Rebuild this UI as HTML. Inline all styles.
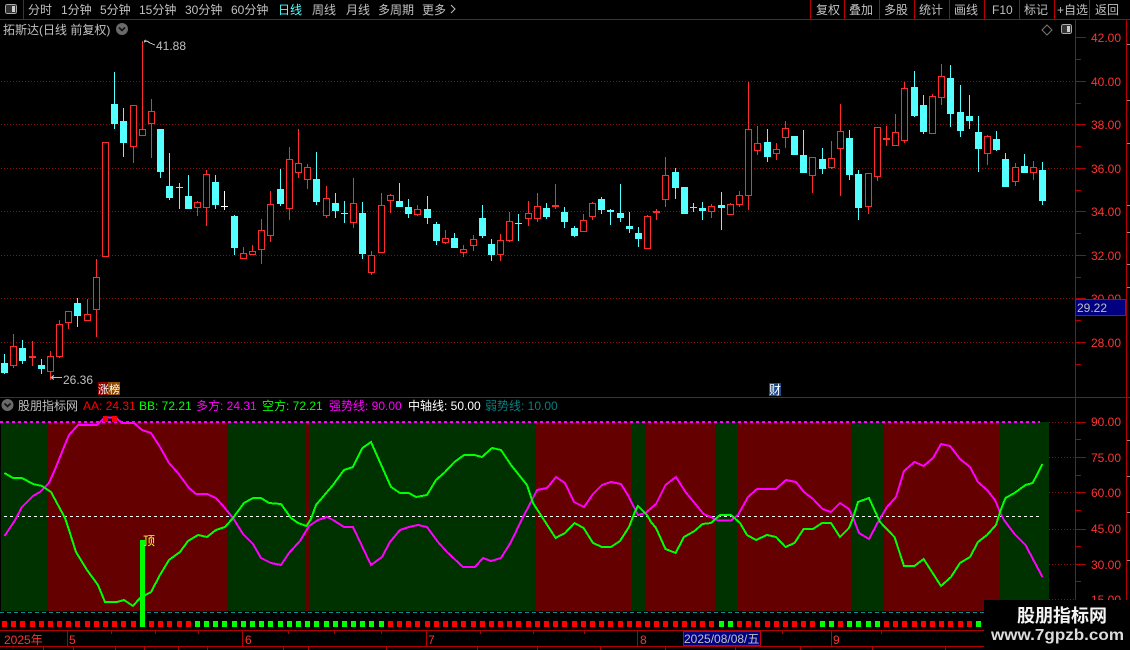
<!DOCTYPE html>
<html><head><meta charset="utf-8"><style>
html,body{margin:0;padding:0;background:#000;overflow:hidden}
svg{display:block}
text{font-family:"Liberation Sans","WenQuanYi Zen Hei","Noto Sans CJK SC",sans-serif;font-size:12px}
</style></head><body>
<svg width="1130" height="650" viewBox="0 0 1130 650" xmlns="http://www.w3.org/2000/svg">
<rect width="1130" height="650" fill="#000"/>
<!-- grid -->
<g stroke="#8a0c0c" stroke-dasharray="1 2" fill="none" shape-rendering="crispEdges">
<path d="M1 81.5H1075M1 124.5H1075M1 168.5H1075M1 211.5H1075M1 255.5H1075M1 298.5H1075M1 342.5H1075"/>
<path d="M1049 422.5H1075M1049 457.5H1075M1049 492.5H1075M1049 529.5H1075M1049 564.5H1075M1049 599.5H1075"/>
</g>
<!-- candles -->
<g shape-rendering="crispEdges">
<path fill="none" stroke="#54ffff" d="M4.5 354V374M22.5 340V364M41.5 359V374M77.5 298V327M114.5 72V129M123.5 108V157M160.5 129V178M169.5 153V200M179.5 183V209M188.5 175V209M215.5 175V209M234.5 215V255M280.5 169V206M316.5 152V205M335.5 193V218M344.5 201V223M362.5 202V259M399.5 183V207M408.5 199V218M427.5 196V224M436.5 222V245M454.5 233V248M482.5 205V238M491.5 239V261M518.5 214V241M546.5 203V219M564.5 207V228M574.5 226V237M601.5 197V214M610.5 209V225M620.5 184V222M629.5 212V233M638.5 227V247M675.5 168V199M684.5 187V214M693.5 203V212M702.5 202V220M721.5 192V230M767.5 129V162M794.5 136V155M803.5 130V173M822.5 148V174M849.5 130V180M858.5 170V220M914.5 71V117M923.5 95V134M950.5 65V127M960.5 85V137M969.5 95V129M978.5 116V172M996.5 131V151M1005.5 153V187M1024.5 154V173M1042.5 162V205"/>
<path fill="#54ffff" d="M1 363h7V373h-7zM19 348h7V361h-7zM38 365h7V369h-7zM74 303h7V316h-7zM111 104h7V124h-7zM120 121h7V143h-7zM157 129h7V172h-7zM166 186h7V198h-7zM176 187h7V188h-7zM185 196h7V209h-7zM212 182h7V205h-7zM231 216h7V248h-7zM277 189h7V204h-7zM313 179h7V202h-7zM332 203h7V211h-7zM341 213h7V214h-7zM359 213h7V254h-7zM396 201h7V207h-7zM405 207h7V214h-7zM424 209h7V218h-7zM433 224h7V241h-7zM451 238h7V248h-7zM479 218h7V236h-7zM488 244h7V255h-7zM515 223h7V224h-7zM543 208h7V217h-7zM561 212h7V222h-7zM571 228h7V236h-7zM598 199h7V210h-7zM607 210h7V212h-7zM617 213h7V218h-7zM626 226h7V229h-7zM635 233h7V239h-7zM672 172h7V188h-7zM681 187h7V214h-7zM690 207h7V208h-7zM699 208h7V211h-7zM718 205h7V208h-7zM764 142h7V157h-7zM791 136h7V155h-7zM800 155h7V173h-7zM819 159h7V169h-7zM846 138h7V175h-7zM855 174h7V208h-7zM911 87h7V116h-7zM920 105h7V132h-7zM947 78h7V114h-7zM957 112h7V131h-7zM966 116h7V121h-7zM975 132h7V149h-7zM993 139h7V150h-7zM1002 159h7V187h-7zM1021 166h7V173h-7zM1039 170h7V201h-7z"/>
<path fill="none" stroke="#ff2c2c" d="M13.5 334V368M32.5 341V366M50.5 351V380M59.5 320V358M68.5 311V329M87.5 299V321M96.5 259V337M105.5 142V257M133.5 105V163M142.5 41V136M151.5 99V158M197.5 201V216M206.5 170V226M243.5 247V259M252.5 245V255M261.5 219V264M270.5 191V242M289.5 147V220M298.5 129V178M307.5 164V189M326.5 186V218M353.5 178V228M371.5 251V275M381.5 193V253M390.5 194V213M417.5 205V216M445.5 230V244M463.5 245V257M473.5 235V251M500.5 234V261M509.5 212V242M528.5 201V226M537.5 193V222M555.5 184V209M583.5 214V232M592.5 202V220M647.5 215V249M656.5 209V220M665.5 157V207M711.5 204V218M730.5 203V215M739.5 191V207M748.5 82V210M757.5 126V155M776.5 143V160M785.5 121V148M812.5 157V193M831.5 141V169M840.5 104V196M868.5 173V214M877.5 127V181M886.5 126V146M895.5 114V146M904.5 82V143M932.5 94V134M941.5 64V105M987.5 135V165M1015.5 163V186M1033.5 161V180"/>
<path fill="#000" stroke="#ff2c2c" d="M10.5 346.5h6V365.5h-6zM47.5 356.5h6V371.5h-6zM56.5 324.5h6V356.5h-6zM65.5 311.5h6V322.5h-6zM84.5 314.5h6V320.5h-6zM93.5 277.5h6V309.5h-6zM102.5 142.5h6V256.5h-6zM130.5 105.5h6V146.5h-6zM139.5 129.5h6V135.5h-6zM148.5 111.5h6V123.5h-6zM194.5 202.5h6V207.5h-6zM203.5 174.5h6V207.5h-6zM240.5 253.5h6V258.5h-6zM249.5 251.5h6V254.5h-6zM258.5 230.5h6V249.5h-6zM267.5 204.5h6V235.5h-6zM286.5 159.5h6V208.5h-6zM295.5 163.5h6V172.5h-6zM304.5 167.5h6V179.5h-6zM323.5 198.5h6V215.5h-6zM350.5 203.5h6V222.5h-6zM368.5 255.5h6V272.5h-6zM378.5 205.5h6V252.5h-6zM387.5 195.5h6V200.5h-6zM414.5 209.5h6V214.5h-6zM442.5 238.5h6V242.5h-6zM460.5 249.5h6V252.5h-6zM470.5 239.5h6V245.5h-6zM497.5 240.5h6V254.5h-6zM506.5 221.5h6V240.5h-6zM525.5 213.5h6V218.5h-6zM534.5 206.5h6V218.5h-6zM580.5 220.5h6V231.5h-6zM589.5 203.5h6V216.5h-6zM644.5 216.5h6V248.5h-6zM662.5 175.5h6V199.5h-6zM708.5 206.5h6V211.5h-6zM727.5 204.5h6V214.5h-6zM736.5 195.5h6V204.5h-6zM745.5 129.5h6V195.5h-6zM754.5 143.5h6V150.5h-6zM773.5 149.5h6V153.5h-6zM782.5 128.5h6V137.5h-6zM809.5 157.5h6V175.5h-6zM828.5 158.5h6V167.5h-6zM837.5 131.5h6V148.5h-6zM865.5 173.5h6V206.5h-6zM874.5 127.5h6V176.5h-6zM892.5 132.5h6V145.5h-6zM901.5 88.5h6V140.5h-6zM929.5 96.5h6V133.5h-6zM938.5 76.5h6V97.5h-6zM984.5 136.5h6V153.5h-6zM1012.5 167.5h6V181.5h-6zM1030.5 167.5h6V172.5h-6z"/>
<path fill="#ff2c2c" d="M29 356h7v2h-7zM552 205h7v2h-7zM653 211h7v2h-7zM883 138h7v2h-7z"/>
<path stroke="#fff" fill="none" d="M224.5 191V210M221 206.5H228"/>
</g>
<!-- axis labels main -->
<g fill="#ff3232">
<text x="1091" y="42">42.00</text><text x="1091" y="86">40.00</text><text x="1091" y="129">38.00</text><text x="1091" y="173">36.00</text><text x="1091" y="216">34.00</text><text x="1091" y="260">32.00</text><text x="1091" y="303">30.00</text><text x="1091" y="347">28.00</text>
<text x="1091" y="426">90.00</text><text x="1091" y="462">75.00</text><text x="1091" y="497">60.00</text><text x="1091" y="533">45.00</text><text x="1091" y="569">30.00</text><text x="1091" y="604">15.00</text>
</g>
<!-- hi/lo labels -->
<g fill="#c0c0c0"><text x="156" y="50">41.88</text><text x="63" y="384">26.36</text></g>
<g stroke="#c0c0c0" fill="none" shape-rendering="crispEdges"><path d="M62 377.5H52M54 375.5l-3 2 3 2M144 42l3-1 3 2 5 2M144 41l2-1"/></g>
<!-- indicator bands -->
<g shape-rendering="crispEdges">
<rect x="1" y="422" width="47" height="189" fill="#003200"/>
<rect x="48" y="422" width="180" height="189" fill="#640000"/>
<rect x="228" y="422" width="77" height="189" fill="#003200"/>
<rect x="305" y="422" width="5" height="189" fill="#640000"/>
<rect x="310" y="422" width="225" height="189" fill="#003200"/>
<rect x="535" y="422" width="97" height="189" fill="#640000"/>
<rect x="632" y="422" width="13" height="189" fill="#003200"/>
<rect x="645" y="422" width="70" height="189" fill="#640000"/>
<rect x="715" y="422" width="22" height="189" fill="#003200"/>
<rect x="737" y="422" width="115" height="189" fill="#640000"/>
<rect x="852" y="422" width="32" height="189" fill="#003200"/>
<rect x="884" y="422" width="115" height="189" fill="#640000"/>
<rect x="999" y="422" width="50" height="189" fill="#003200"/>
<path stroke="#ff00ff" stroke-width="2" stroke-dasharray="3 3" d="M0 422H1040"/>
<path stroke="#ffffff" stroke-dasharray="3 3" d="M4 516.5H1040"/>
<path stroke="#0f8a8a" stroke-dasharray="4 3" d="M0 612.5H1130"/>
<!-- squares -->
<path stroke="#ff0000" stroke-width="6" d="M2 624h5M11 624h5M20 624h5M30 624h5M39 624h5M48 624h5M57 624h5M66 624h5M75 624h5M85 624h5M94 624h5M103 624h5M112 624h5M121 624h5M131 624h5M149 624h5M158 624h5M167 624h5M177 624h5M186 624h5M388 624h5M397 624h5M406 624h5M415 624h5M425 624h5M434 624h5M443 624h5M452 624h5M461 624h5M471 624h5M480 624h5M489 624h5M498 624h5M507 624h5M516 624h5M526 624h5M535 624h5M544 624h5M553 624h5M562 624h5M572 624h5M581 624h5M590 624h5M599 624h5M608 624h5M618 624h5M627 624h5M636 624h5M645 624h5M654 624h5M663 624h5M673 624h5M682 624h5M691 624h5M700 624h5M709 624h5M737 624h5M746 624h5M755 624h5M765 624h5M774 624h5M783 624h5M792 624h5M801 624h5M810 624h5M838 624h5M884 624h5M893 624h5M902 624h5M912 624h5M921 624h5M930 624h5M939 624h5M948 624h5M958 624h5M967 624h5"/>
<path stroke="#00ff00" stroke-width="6" d="M195 624h5M204 624h5M213 624h5M222 624h5M232 624h5M241 624h5M250 624h5M259 624h5M268 624h5M278 624h5M287 624h5M296 624h5M305 624h5M314 624h5M324 624h5M333 624h5M342 624h5M351 624h5M360 624h5M369 624h5M379 624h5M719 624h5M728 624h5M820 624h5M829 624h5M847 624h5M856 624h5M866 624h5M875 624h5M976 624h5"/>
<rect x="140" y="540" width="5" height="87" fill="#00ff00"/>
</g>
<text x="143" y="545" fill="#ffff40">顶</text>
<!-- lines -->
<polyline fill="none" stroke="#ff00ff" stroke-width="2" shape-rendering="crispEdges" points="4.5,536 14.5,521 22,507 33,496 40,492 49,483 56,467 64,447 69,435 78,425 97,425 104,418 115,417 122,423 134,423 142,430 151,433 160,447 169,463 178,473 189,488 196,494 207,494 216,498 224,507 233,518 243,534 253,544 261,558 271,563 281,565 289,553 300,541 309,526 318,520 327,517 333,520 344,527 353,527 371,565 382,557 390,542 400,530 409,527 418,525 427,527 438,542 447,552 463,567 475,567 483,558 491,561 501,558 511,542 522,519 531,502 537,490 547,488 556,477 565,483 574,502 584,507 593,494 602,485 611,482 621,484 629,497 638,515 645.5,513 656,504 665.5,485 676,477 685.5,492 694.5,503 703.6,514 713,518 718,520.5 731,520.5 738,515 748,497 757,489 776,489 786,480 796,482 804,492 813,499 822.5,509 831,512 840,503 849,509 854,520 859,533 869,539 878,522 887,507 896,497 904,471 914.5,462 923.6,466 933,458 941,444 950,446 960,459 970,467 978,482 987,490 995,500 1000,512 1004,520 1014.5,534 1025.5,545 1034.5,562 1042.5,577"/>
<polyline fill="none" stroke="#00ff00" stroke-width="2" shape-rendering="crispEdges" points="4.4,473 13,478 22,478 33,484 42,486 51,492 58,505 65,518 69,530 76,552 87,570 98,585 105,602 117,602 124,600 133,606 140,598 151,592 160,575 169,560 180,552 188,541 198,535 207,537 216,530 225,527 233,518 244,503 253,498 261,498 269,503 281,504 291,518 298,523 306.5,526 311,519 316,505 333,485 344,470 353,467 362.5,448 371,442 391,487 400,493 409,493 416,497 427,495 436,480 444,473 454.5,462 464,455 474.5,455 482,457 492,448 501,450 511,465 527,485 533,503 544,520 555.6,538 565,533 574.5,523 583.6,528 593,543 602,547 611,547 620,541 629,527 634.5,513 638,506 647,515 651,522 656,528 665.5,549 675.6,553 684,537 694.5,531 702.5,524 711,523 720,515 731,515 740,523 747,535 756,540 767,535 776,537 785.5,547 794.5,543 803.6,529 813,529 822,523 831,523 840,537 849,528 853,518 858,502 869,498 880,522 894.5,537 904,566 914.5,566 923.6,559 941,586 951,577 960,563 970,557 978,542 987,535 996,525 1000,512 1005.5,498 1014.5,493 1025.5,485 1032.7,483 1042.5,464"/>
<path fill="#ff0000" shape-rendering="crispEdges" d="M103 416h5v6h-5zM112 416h5v6h-5z"/>
<!-- frame lines -->
<g stroke="#b40000" fill="none" shape-rendering="crispEdges">
<path d="M0 19.5H1130M0 397.5H1130M0 630.5H1130M0 646.5H1130"/>
<path d="M23.5 0V19M810.5 0V19M844.5 0V19M879.5 0V19M914.5 0V19M949.5 0V19M984.5 0V19M1019.5 0V19M1054.5 0V19M1089.5 0V19"/>
<path d="M1075.5 19V630M1126.5 19V630"/>
<path d="M1076 37.5h10M1076 59.5h5M1076 81.5h10M1076 103.5h5M1076 124.5h10M1076 146.5h5M1076 168.5h10M1076 190.5h5M1076 211.5h10M1076 233.5h5M1076 255.5h10M1076 277.5h5M1076 298.5h10M1076 320.5h5M1076 342.5h10M1076 364.5h5"/>
<path d="M1076 422.5h10M1076 439.5h5M1076 457.5h10M1076 475.5h5M1076 492.5h10M1076 510.5h5M1076 529.5h10M1076 546.5h5M1076 564.5h10M1076 581.5h5"/>
<path d="M67.5 631V646M242.5 631V646M426.5 631V646M637.5 631V646M831.5 631V646"/>
<path d="M111.5 631v3M155.5 631v3M198.5 631v3M288.5 631v3M334.5 631v3M381.5 631v3M480.5 631v3M533.5 631v3M584.5 631v3M782.5 631v3M881.5 631v3M43.5 646v4M73.5 646v4M115.5 646v4M144.5 646v4M178.5 646v4M207.5 646v4M283.5 646v4M308.5 646v4M386.5 646v4M477.5 646v4M537.5 646v4M600.5 646v4M665.5 646v4M735.5 646v4M800.5 646v4M872.5 646v4M945.5 646v4"/>
</g>
<path stroke="#8c8c8c" fill="none" shape-rendering="crispEdges" d="M1127 44.5h3M1127 100.5h3M1127 143.5h3M1127 205.5h3M1127 232.5h3M1127 264.5h3M1127 287.5h3M1127 440.5h3M1127 476.5h3M1127 512.5h3M1127 560.5h3"/>
<!-- toolbar -->
<g fill="#c0c0c0">
<text x="28" y="14">分时</text><text x="61" y="14">1分钟</text><text x="100" y="14">5分钟</text><text x="139" y="14">15分钟</text><text x="185" y="14">30分钟</text><text x="231" y="14">60分钟</text>
<text x="278" y="14" fill="#54ffff">日线</text>
<text x="312" y="14">周线</text><text x="346" y="14">月线</text><text x="378" y="14">多周期</text><text x="422" y="14">更多</text>
<text x="816" y="14">复权</text><text x="849" y="14">叠加</text><text x="884" y="14">多股</text><text x="919" y="14">统计</text><text x="954" y="14">画线</text><text x="992" y="14">F10</text><text x="1024" y="14">标记</text><text x="1057" y="14">+自选</text><text x="1095" y="14">返回</text>
<text x="3" y="34">拓斯达(日线 前复权)</text>
</g>
<path d="M451 5l4 4-4 4" fill="none" stroke="#c0c0c0"/>
<!-- small icons -->
<g shape-rendering="crispEdges">
<rect x="5.5" y="4.5" width="11" height="9" rx="2" fill="#333" stroke="#aaa"/><rect x="12" y="6" width="3" height="6" fill="#ccc"/>
<rect x="1061.5" y="24.5" width="10" height="9" rx="2" fill="#333" stroke="#aaa"/><rect x="1067" y="26" width="3" height="6" fill="#ccc"/>
</g>
<path d="M1047 25l5 5-5 5-5-5z" fill="none" stroke="#777"/>
<circle cx="122" cy="29" r="6" fill="#6a6a6a"/><path d="M119 27.5l3 3 3-3" fill="none" stroke="#111" stroke-width="1.6"/>
<circle cx="7.5" cy="405" r="6" fill="#6a6a6a"/><path d="M4.5 403.5l3 3 3-3" fill="none" stroke="#111" stroke-width="1.6"/>
<!-- legend -->
<text x="18" y="410" fill="#c0c0c0">股朋指标网</text>
<text x="83" y="410" fill="#ff0000">AA: 24.31</text>
<text x="139" y="410" fill="#00ff00">BB: 72.21</text>
<text x="196" y="410" fill="#ff00ff">多方: 24.31</text>
<text x="262" y="410" fill="#00ff00">空方: 72.21</text>
<text x="329" y="410" fill="#ff00ff">强势线: 90.00</text>
<text x="408" y="410" fill="#ffffff">中轴线: 50.00</text>
<text x="485" y="410" fill="#0a7f7f">弱势线: 10.00</text>
<!-- tags -->
<g shape-rendering="crispEdges"><rect x="98" y="382" width="10" height="13" fill="#8b0000"/><rect x="108" y="382" width="12" height="13" fill="#8b4a00"/><rect x="769" y="383" width="12" height="13" fill="#1a4a8a"/></g>
<text x="98" y="393" fill="#fff" style="font-size:11px">涨榜</text>
<text x="769" y="394" fill="#fff">财</text>
<!-- price box -->
<rect x="1075.5" y="299.5" width="50" height="16" fill="#000080" stroke="#c80000" shape-rendering="crispEdges"/>
<text x="1077" y="312" fill="#c0c0c0">29.22</text>
<!-- bottom axis -->
<g fill="#ff3232"><text x="4" y="644">2025年</text><text x="69" y="644">5</text><text x="245" y="644">6</text><text x="428" y="644">7</text><text x="640" y="644">8</text><text x="833" y="644">9</text></g>
<rect x="683.5" y="631.5" width="77" height="14" fill="#000080" stroke="#c80000" shape-rendering="crispEdges"/>
<text x="684" y="643" fill="#c0c0c0">2025/08/08/五</text>
<!-- watermark -->
<rect x="984" y="600" width="146" height="50" fill="#000"/>
<text x="1017" y="622" fill="#f4f4f4" style="font-size:18px;font-weight:bold">股朋指标网</text>
<text x="991" y="640" fill="#dcdcdc" textLength="133" lengthAdjust="spacingAndGlyphs" style="font-size:16px;font-weight:bold">www.7gpzb.com</text>
</svg>
</body></html>
